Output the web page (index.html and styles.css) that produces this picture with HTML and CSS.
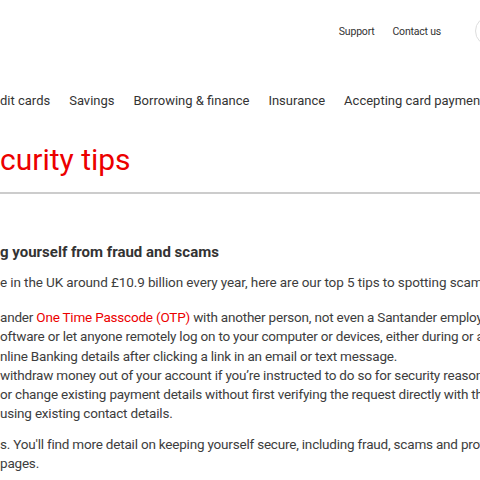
FILE: index.html
```
<!DOCTYPE html>
<html lang="en">
<head>
	<meta charset="UTF-8">
	<title>Security tips</title>
	<link rel="stylesheet" href="styles.css">
</head>
<body>
	<div class="page">
		<div class="top">
			<a class="toplink">Support</a>
			<a class="toplink">Contact us</a>
			<span class="search"></span>
		</div>
		<ul class="nav">
			<li>dit cards</li>
			<li>Savings</li>
			<li>Borrowing &amp; finance</li>
			<li>Insurance</li>
			<li>Accepting card payments</li>
		</ul>
		<h1 class="title">curity tips</h1>
		<div class="rule"></div>
		<div class="content">
			<h2>g yourself from fraud and scams</h2>
			<p class="intro">e in the UK around £10.9 billion every year, here are our top 5 tips to spotting scams and keeping safe.</p>
			<ul class="tips">
				<li>ander <span class="red">One Time Passcode (OTP)</span> with another person, not even a Santander employee.</li>
				<li>oftware or let anyone remotely log on to your computer or devices, either during or after a call.</li>
				<li>nline Banking details after clicking a link in an email or text message.</li>
				<li>withdraw money out of your account if you’re instructed to do so for security reasons.</li>
				<li>or change existing payment details without first verifying the request directly with the company</li>
				<li>using existing contact details.</li>
			</ul>
			<p class="more">s. You'll find more detail on keeping yourself secure, including fraud, scams and protecting yourself online on our<br>pages.</p>
		</div>
	</div>
</body>
</html>
```
FILE: styles.css
```
*{margin:0;padding:0;list-style:none;box-sizing:border-box;}
html,body{overflow:hidden;background:#fff;}
body{font-family:Roboto,"Noto Sans",sans-serif;color:#3d3d3d;}
.page{width:480px;}
.top{height:62px;display:flex;justify-content:flex-end;align-items:center;gap:18px;}
.toplink{font-size:10.5px;letter-spacing:-0.2px;color:#333;}
.search{width:30px;height:30px;border:1px solid #ddd;border-radius:50%;margin-right:-25px;margin-left:16px;flex:none;}
.nav{display:flex;gap:19px;white-space:nowrap;height:78px;padding-top:31px;font-size:13px;color:#333;}
.nav li{flex:none;}
.title{font-size:30px;font-weight:normal;color:#ec0000;height:52px;line-height:40px;}
.rule{height:2px;background:#ccc;margin-right:-10px;}
.content{padding-top:46px;white-space:nowrap;}
h2{font-size:15px;font-weight:bold;color:#333;line-height:24px;}
.intro{font-size:13.5px;letter-spacing:-0.1px;line-height:20px;margin-top:8px;}
.tips{margin-top:16px;font-size:13.5px;letter-spacing:-0.2px;line-height:19.3px;}
.red{color:#ec0000;}
.more{font-size:13.5px;letter-spacing:-0.2px;line-height:19.5px;margin-top:11px;}
```
